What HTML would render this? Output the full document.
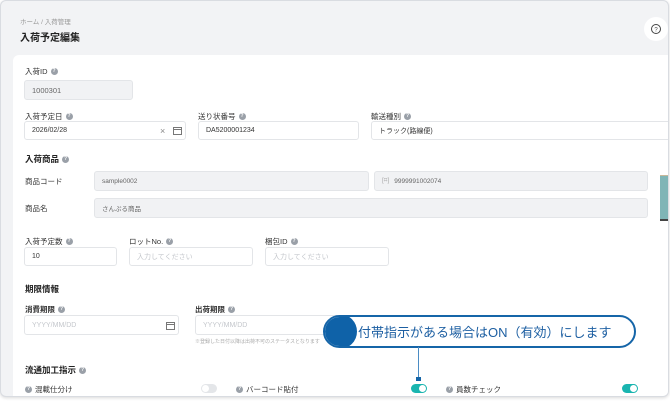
<!DOCTYPE html>
<html><head><meta charset="utf-8"><style>
*{box-sizing:border-box;margin:0;padding:0}
body{width:670px;height:403px;background:#fff;font-family:"Liberation Sans","Noto Sans CJK JP",sans-serif;position:relative;overflow:hidden;color:#333}
.frame{position:absolute;left:0;top:0;width:669px;height:397px;background:#f2f3f5;border:1px solid #d9dce1;border-radius:6px;overflow:hidden;box-shadow:0 1px 3px rgba(0,0,0,.15)}
.card{position:absolute;left:12px;top:54px;width:670px;height:350px;background:#fff;border-radius:6px 0 0 0}
.a{position:absolute;white-space:nowrap}
.lbl{font-size:7.5px;color:#333;display:flex;align-items:center;height:9px}
.b{font-size:8.5px;font-weight:bold;color:#222;display:flex;align-items:center;height:10px}
.q{display:inline-block;width:7px;height:7px;border-radius:50%;background:#9aa0a8;margin-left:3px;color:#fff;font-size:5px;text-align:center;line-height:7px;font-weight:bold;flex:none}
.in{position:absolute;border:1px solid #e3e5e8;border-radius:3px;background:#fff;font-size:7px;color:#333;padding-left:7px;display:flex;align-items:center}
.g{background:#f1f2f4;color:#666}
.ph{color:#c4c7cc}
.tg{position:absolute;width:16px;height:9px;border-radius:5px;background:#1ab5b0}
.tg::after{content:"";position:absolute;right:1px;top:1px;width:7px;height:7px;border-radius:50%;background:#fff}
.tg.off{background:#e4e6e9}.tg.off::after{left:1px;right:auto}
</style></head><body>
<div class="frame">
<div class="a" style="left:19px;top:15px;font-size:6.5px;color:#999">ホーム / 入荷管理</div>
<div class="a" style="left:19px;top:28px;font-size:10px;font-weight:bold;color:#222">入荷予定編集</div>
<div class="a" style="left:643px;top:16px;width:24px;height:24px;border-radius:50%;background:#fff"><svg width="24" height="24" viewBox="0 0 24 24"><circle cx="12" cy="12" r="4.5" fill="none" stroke="#444" stroke-width="1"/><text x="12" y="14.3" font-size="6" text-anchor="middle" fill="#444" font-family="Liberation Sans">?</text></svg></div>
<div class="card"></div>
<div class="a lbl" style="left:24px;top:66px">入荷ID<span class="q">?</span></div>
<div class="in g" style="left:23px;top:79px;width:109px;height:20px;font-size:7.5px">1000301</div>
<div class="a lbl" style="left:24px;top:111px">入荷予定日<span class="q">?</span></div>
<div class="in" style="left:23px;top:120px;width:162px;height:19px">2026/02/28<span style="position:absolute;left:135px;color:#888;font-size:9px">×</span><svg style="position:absolute;left:148px;top:5px" width="9" height="8"><rect x=".5" y=".5" width="8" height="7" fill="none" stroke="#777"/><line x1="0" y1="2.5" x2="9" y2="2.5" stroke="#777"/></svg></div>
<div class="a lbl" style="left:197px;top:111px">送り状番号<span class="q">?</span></div>
<div class="in" style="left:197px;top:120px;width:161px;height:19px">DA5200001234</div>
<div class="a lbl" style="left:370px;top:111px">輸送種別<span class="q">?</span></div>
<div class="in" style="left:370px;top:120px;width:310px;height:19px">トラック(路線便)</div>
<div class="a b" style="left:24px;top:153px">入荷商品<span class="q">?</span></div>
<div class="a lbl" style="left:24px;top:176px">商品コード</div>
<div class="in g" style="left:93px;top:170px;width:275px;height:20px;font-size:6.5px">sample0002</div>
<div class="in g" style="left:373px;top:170px;width:274px;height:20px;font-size:6.5px"><span style="color:#aaa;margin-right:5px">[⌗]</span>9999991002074</div>
<div class="a" style="left:659px;top:174px;width:10px;height:46px;background:#7fb5b6;border-top:1px solid #c8b89a;border-bottom:2px solid #444"></div>
<div class="a lbl" style="left:24px;top:203px">商品名</div>
<div class="in g" style="left:93px;top:197px;width:554px;height:20px;font-size:6.5px">さんぷる商品</div>
<div class="a lbl" style="left:24px;top:236px">入荷予定数<span class="q">?</span></div>
<div class="in" style="left:23px;top:246px;width:93px;height:19px">10</div>
<div class="a lbl" style="left:128px;top:236px">ロットNo.<span class="q">?</span></div>
<div class="in ph" style="left:128px;top:246px;width:124px;height:19px">入力してください</div>
<div class="a lbl" style="left:264px;top:236px">梱包ID<span class="q">?</span></div>
<div class="in ph" style="left:264px;top:246px;width:124px;height:19px">入力してください</div>
<div class="a b" style="left:24px;top:283px">期限情報</div>
<div class="a lbl" style="left:24px;top:304px;font-weight:bold">消費期限<span class="q">?</span></div>
<div class="in ph" style="left:23px;top:314px;width:155px;height:20px">YYYY/MM/DD<svg style="position:absolute;left:141px;top:6px" width="9" height="8"><rect x=".5" y=".5" width="8" height="7" fill="none" stroke="#777"/><line x1="0" y1="2.5" x2="9" y2="2.5" stroke="#777"/></svg></div>
<div class="a lbl" style="left:194px;top:304px;font-weight:bold">出荷期限<span class="q">?</span></div>
<div class="in ph" style="left:194px;top:314px;width:160px;height:20px">YYYY/MM/DD</div>
<div class="a" style="left:194px;top:337px;font-size:5px;color:#aaa">※登録した日付以降は出荷不可のステータスとなります</div>
<div class="a" style="left:322px;top:314px;width:313px;height:33px;border:2.5px solid #1565a8;border-radius:17px;background:#fff;overflow:hidden">
<div style="position:absolute;left:-3px;top:-3px;width:35px;height:35px;border-radius:50%;background:#0f62a8"></div>
<div style="position:absolute;left:33px;top:5px;font-size:13px;color:#1d5fa2;white-space:nowrap">付帯指示がある場合はON（有効）にします</div></div>
<div class="a" style="left:417px;top:346px;width:1px;height:31px;background:#4b8cc4"></div>
<div class="a" style="left:415px;top:376px;width:5px;height:4px;background:#1565a8"></div>
<div class="a b" style="left:24px;top:364px">流通加工指示<span class="q">?</span></div>
<div class="a lbl" style="left:24px;top:384px"><span class="q" style="margin:0 3px 0 0">?</span>混載仕分け</div>
<div class="tg off" style="left:200px;top:383px"></div>
<div class="a lbl" style="left:235px;top:384px"><span class="q" style="margin:0 3px 0 0">?</span>バーコード貼付</div>
<div class="tg" style="left:410px;top:383px"></div>
<div class="a lbl" style="left:445px;top:384px"><span class="q" style="margin:0 3px 0 0">?</span>員数チェック</div>
<div class="tg" style="left:621px;top:383px"></div>
</div>
</body></html>
